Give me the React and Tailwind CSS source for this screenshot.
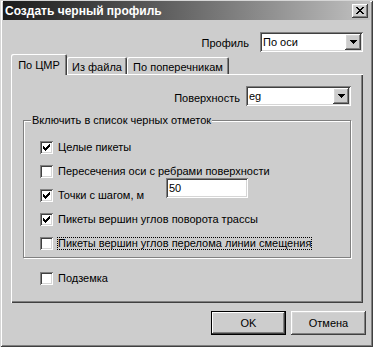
import { useState } from 'react';

const raised =
  'shadow-[inset_-1px_-1px_#404040,inset_1px_1px_#ffffff,inset_-2px_-2px_#808080,inset_2px_2px_#d6d6d6]';
const sunken =
  'shadow-[inset_1px_1px_#808080,inset_-1px_-1px_#ffffff,inset_2px_2px_#404040,inset_-2px_-2px_#d6d6d6]';

const DropArrow = () => (
  <svg width="7" height="4" viewBox="0 0 7 4" shapeRendering="crispEdges">
    <path d="M0 0h7v1H0z M1 1h5v1H1z M2 2h3v1H2z M3 3h1v1H3z" fill="#000" />
  </svg>
);

const Combo = ({ value, width }) => (
  <div className={`${width} h-[20px] bg-white flex items-center justify-between pl-[3px] pr-[2px] ${sunken}`}>
    <span>{value}</span>
    <span className={`w-[16px] h-[16px] bg-[#cdcdcd] flex items-center justify-center ${raised}`}>
      <DropArrow />
    </span>
  </div>
);

const CheckBox = ({ checked, onClick }) => (
  <span
    onClick={onClick}
    className={`w-[13px] h-[13px] shrink-0 bg-white flex items-center justify-center ${sunken}`}
  >
    {checked && (
      <svg width="7" height="7" viewBox="0 0 7 7" shapeRendering="crispEdges">
        <path
          d="M6 0h1v1H6z M5 1h2v1H5z M0 2h1v1H0z M4 2h3v1H4z M0 3h2v1H0z M3 3h3v1H3z M0 4h5v1H0z M1 5h3v1H1z M2 6h1v1H2z"
          fill="#000"
        />
      </svg>
    )}
  </span>
);

const App = () => {
  const [checks, setChecks] = useState({
    whole: true,
    cross: false,
    step: true,
    turn: true,
    bend: false,
    under: false,
  });

  const toggle = (key) => setChecks({ ...checks, [key]: !checks[key] });

  return (
    <div className="w-[373px] h-[347px] bg-[#cdcdcd] text-[11px] text-black font-['Liberation_Sans',Arial,sans-serif] p-[3px] flex flex-col select-none shadow-[inset_1px_1px_#d6d6d6,inset_-1px_-1px_#404040,inset_2px_2px_#ffffff,inset_-2px_-2px_#808080]">
      {/* title bar */}
      <div className="-mt-[2px] h-[19px] shrink-0 flex items-center justify-between pl-[2px] pr-[2px] bg-linear-to-r from-[#1c1c1c] to-[#c2c2c2]">
        <span className="text-white font-bold text-[12px] leading-none">Создать черный профиль</span>
        <span className={`w-[16px] h-[14px] bg-[#cdcdcd] flex items-center justify-center ${raised}`}>
          <svg width="8" height="7" viewBox="0 0 8 7" shapeRendering="crispEdges">
            <path
              d="M0 0h2v1H0z M6 0h2v1H6z M1 1h2v1H1z M5 1h2v1H5z M2 2h4v1H2z M3 3h2v1H3z M2 4h4v1H2z M1 5h2v1H1z M5 5h2v1H5z M0 6h2v1H0z M6 6h2v1H6z"
              fill="#000"
            />
          </svg>
        </span>
      </div>

      {/* profile */}
      <div className="mt-[12px] h-[20px] flex items-center justify-end pr-[7px]">
        <span className="pt-[3px] mr-[11px]">Профиль</span>
        <Combo value="По оси" width="w-[103px]" />
      </div>

      {/* tabs */}
      <div className="mt-[2px] ml-[8px] h-[20px] flex items-end">
        <div className="relative z-10 -mb-[1px] w-[56px] h-[21px] bg-[#cdcdcd] rounded-t-[2px] flex items-start justify-center pt-[3px] shadow-[inset_1px_1px_#ffffff,inset_-1px_0_#404040,inset_-2px_0_#808080]">
          По ЦМР
        </div>
        <div className="w-[60px] h-[17px] rounded-t-[2px] flex items-start justify-center pt-[2px] shadow-[inset_1px_1px_#ffffff,inset_-1px_0_#404040,inset_-2px_0_#808080]">
          Из файла
        </div>
        <div className="w-[102px] h-[17px] rounded-t-[2px] flex items-start justify-center pt-[2px] shadow-[inset_1px_1px_#ffffff,inset_-1px_0_#404040,inset_-2px_0_#808080]">
          По поперечникам
        </div>
      </div>

      {/* tab panel */}
      <div className="ml-[8px] mr-[7px] h-[229px] border-l border-t border-white flex flex-col shadow-[inset_-1px_-1px_#404040,inset_-2px_-2px_#808080]">
        <div className="mt-[11px] h-[20px] flex items-center justify-end pr-[12px]">
          <span className="pt-[5px] mr-[6px]">Поверхность</span>
          <Combo value="eg" width="w-[105px]" />
        </div>

        <div className="relative mt-[14px] ml-[11px] mr-[12px] h-[138px] border border-[#808080] pt-[14px] pl-[16px] shadow-[inset_1px_1px_#ffffff,1px_1px_#ffffff]">
          <span className="absolute left-[7px] -top-[7px] px-[1px] leading-[13px] bg-[#cdcdcd]">
            Включить в список черных отметок
          </span>

          <div className="h-[24px] flex items-center">
            <CheckBox checked={checks.whole} onClick={() => toggle('whole')} />
            <span className="ml-[5px]">Целые пикеты</span>
          </div>
          <div className="h-[24px] flex items-center">
            <CheckBox checked={checks.cross} onClick={() => toggle('cross')} />
            <span className="ml-[5px]">Пересечения оси с ребрами поверхности</span>
          </div>
          <div className="h-[24px] flex items-center">
            <CheckBox checked={checks.step} onClick={() => toggle('step')} />
            <span className="ml-[5px] w-[108px]">Точки с шагом, м</span>
            <div className={`self-start -mt-[5px] w-[82px] h-[20px] bg-white flex items-center pl-[3px] ${sunken}`}>
              50
            </div>
          </div>
          <div className="h-[24px] flex items-center">
            <CheckBox checked={checks.turn} onClick={() => toggle('turn')} />
            <span className="ml-[5px]">Пикеты вершин углов поворота трассы</span>
          </div>
          <div className="h-[24px] flex items-center">
            <CheckBox checked={checks.bend} onClick={() => toggle('bend')} />
            <span className="ml-[4px] border border-dotted border-black leading-[11px]">
              Пикеты вершин углов перелома линии смещения
            </span>
          </div>
        </div>

        <div className="mt-[8px] ml-[28px] h-[24px] flex items-center">
          <CheckBox checked={checks.under} onClick={() => toggle('under')} />
          <span className="ml-[5px]">Подземка</span>
        </div>
      </div>

      {/* buttons */}
      <div className="mt-[8px] h-[24px] flex justify-end gap-[5px] pr-[4px]">
        <button className="w-[75px] h-[24px] border border-black bg-[#cdcdcd] shadow-[inset_-1px_-1px_#404040,inset_1px_1px_#ffffff,inset_-2px_-2px_#808080]">
          OK
        </button>
        <button className={`w-[75px] h-[24px] bg-[#cdcdcd] ${raised}`}>Отмена</button>
      </div>
    </div>
  );
};

export default App;
